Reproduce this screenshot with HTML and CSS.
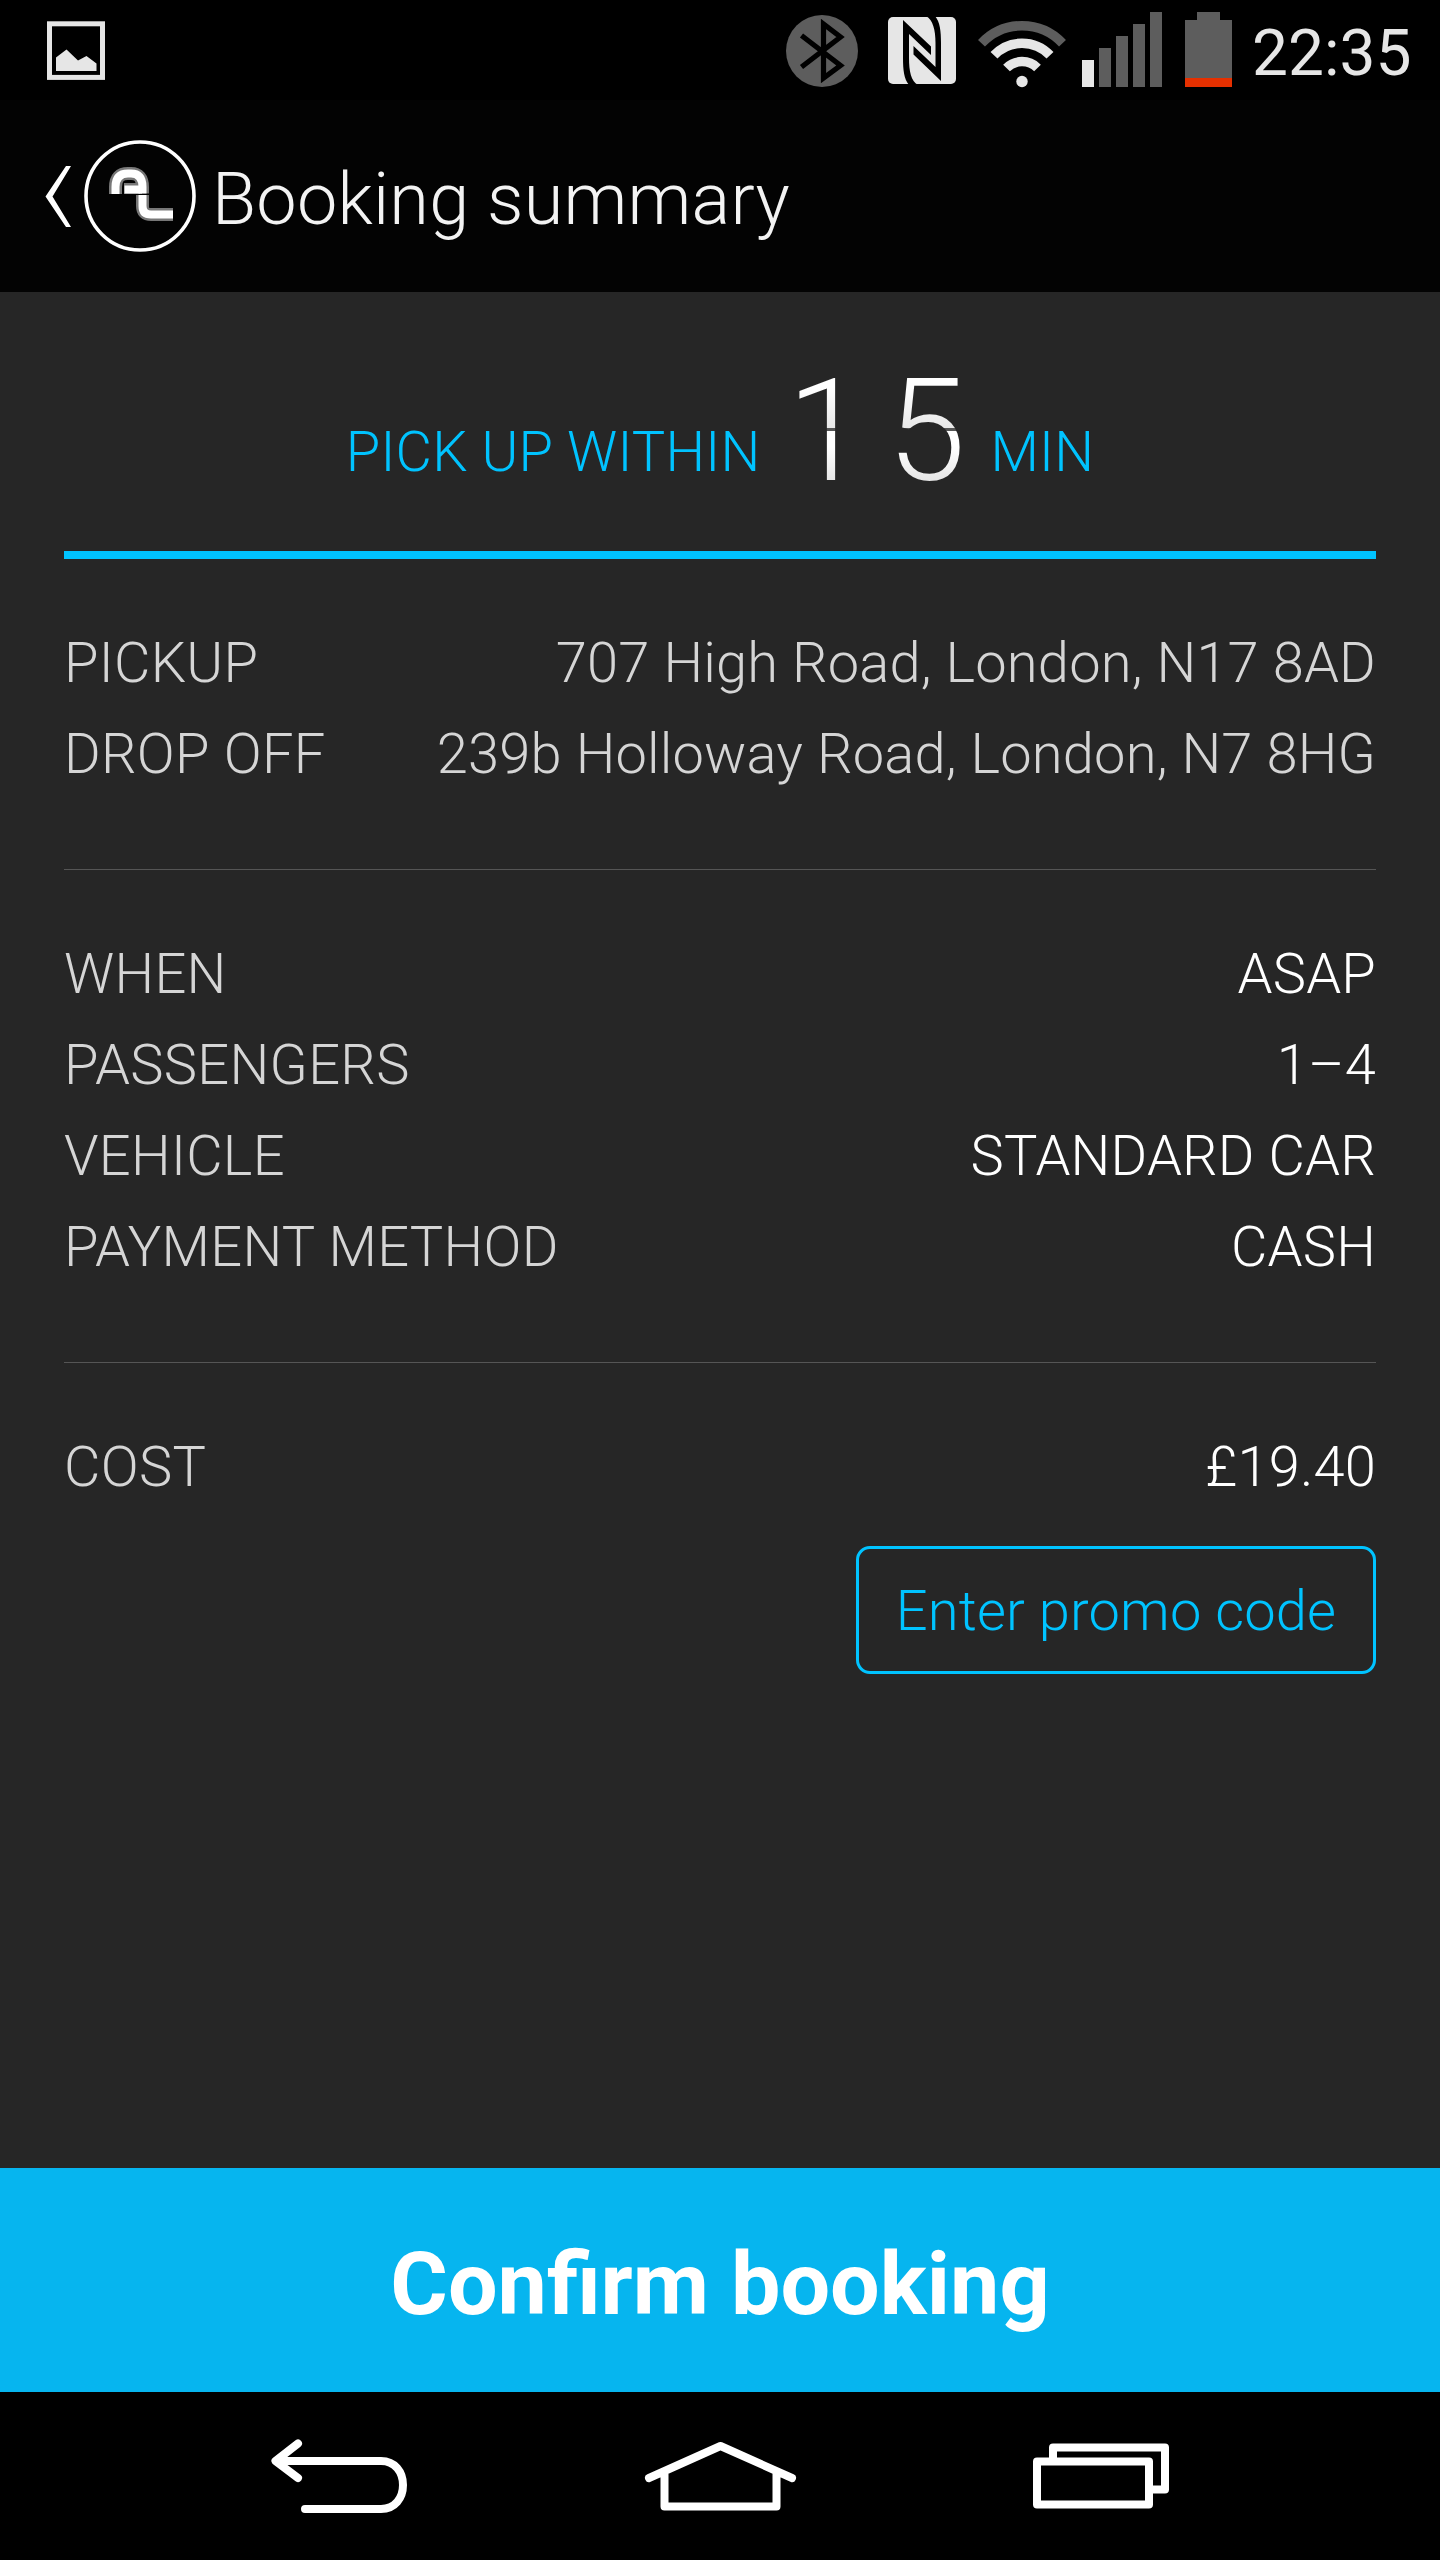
FILE: index.html
```
<!DOCTYPE html>
<html lang="en">
<head>
<meta charset="utf-8">
<title>Booking summary</title>
<link rel="stylesheet" href="styles.css">
</head>
<body>
<div class="screen">
  <div class="status">
    <svg class="status-left" width="60" height="100" viewBox="46 0 60 100">
      <rect x="49.5" y="23.8" width="53" height="53.6" fill="none" stroke="#e6e6e6" stroke-width="5"/>
      <path d="M56 71V57.500L66.500 49.500L78 60.500L86.500 56L96.500 63.500V71Z" fill="#e6e6e6"/>
    </svg>
    <svg class="status-icons" width="460" height="100" viewBox="780 0 460 100">
      <circle cx="822" cy="51" r="36" fill="#5d5d5d"/>
      <path d="M801.500 35.500L840.500 65.500L823.500 78V24L840.500 37L801.500 67" fill="none" stroke="#000" stroke-width="5.200"/>
      <rect x="888" y="17" width="68" height="67" rx="5" fill="#e6e6e6"/>
      <path d="M903 20L931 46.500V55L909 34V58C909 71 911 81 918 85H909C904 79 903 70 903 58Z"/>
      <path d="M941 81L913.500 54.500V46L935.500 67V43C935.500 30 933 20 926 16H935C940 22 941 31 941 43Z"/>
      <g fill="none" stroke="#e6e6e6" stroke-width="9.500">
        <path d="M981.500 43.300A55.500 55.500 0 0 1 1062.500 43.300" stroke="#5d5d5d"/>
        <path d="M994 55.300A38.500 38.500 0 0 1 1050 55.300"/>
        <path d="M1006.500 68A22 22 0 0 1 1037.500 68"/>
      </g>
      <circle cx="1022" cy="81.500" r="5.700" fill="#e6e6e6"/>
      <path d="M1082 60h12v27h-12Z" fill="#e6e6e6"/>
      <path d="M1099 48h12v39h-12ZM1116 36h12v51h-12ZM1133 24h12v63h-12ZM1150 12h12v75h-12ZM1197 12h23v8h12v58h-47V20h12Z" fill="#5d5d5d"/>
      <path d="M1185 78h47v9h-47Z" fill="#e63000"/>
    </svg>
    <span class="clock">22:35</span>
  </div>
  <header class="bar">
    <svg width="152" height="192" viewBox="45 100 152 192">
      <path d="M66 166H71L52.500 196.500L71 227H66L45.500 196.500Z" fill="#fff"/>
      <circle cx="140" cy="196" r="54" fill="none" stroke="#fff" stroke-width="3.600"/>
      <g fill="none" stroke="#777" stroke-width="13">
        <path d="M115.500 194V187Q115.500 173.500 128 173.500H131Q142.500 173.500 142.500 187V193.500"/>
        <path d="M124 188.500H140" stroke-width="11"/>
        <path d="M142.500 195V206Q142.500 214.500 151 214.500H173"/>
      </g>
      <g fill="none" stroke="#fff" stroke-width="8">
        <path d="M115.500 194V187Q115.500 173.500 128 173.500H131Q142.500 173.500 142.500 187V193.500"/>
        <path d="M124.500 189.500H142"/>
        <path d="M142.500 195V206Q142.500 214.500 151 214.500H173"/>
      </g>
    </svg>
    <h1 class="title">Booking summary</h1>
  </header>
  <main class="content">
    <section class="eta">
      <span class="eta-text">PICK UP WITHIN</span>
      <span class="digits"><span class="digit">1</span><span class="digit">5</span></span>
      <span class="eta-text">MIN</span>
    </section>
    <section class="group">
      <div class="row"><span class="label">PICKUP</span><span class="value">707 High Road, London, N17 8AD</span></div>
      <div class="row"><span class="label">DROP OFF</span><span class="value">239b Holloway Road, London, N7 8HG</span></div>
    </section>
    <section class="group">
      <div class="row"><span class="label">WHEN</span><span class="value strong">ASAP</span></div>
      <div class="row"><span class="label">PASSENGERS</span><span class="value strong">1–4</span></div>
      <div class="row"><span class="label">VEHICLE</span><span class="value strong">STANDARD CAR</span></div>
      <div class="row"><span class="label">PAYMENT METHOD</span><span class="value strong">CASH</span></div>
    </section>
    <section class="group cost">
      <div class="row"><span class="label">COST</span><span class="value strong">£19.40</span></div>
      <button class="promo">Enter promo code</button>
    </section>
  </main>
  <button class="confirm">Confirm booking</button>
  <nav class="nav">
    <svg width="1440" height="168" viewBox="0 2392 1440 168" fill="none" stroke="#fff" stroke-width="8" stroke-linecap="round" stroke-linejoin="round">
      <path d="M298 2443.500L275.500 2461L298 2478M277 2461H381C395 2461 403 2472 403 2485S395 2509 381 2509H305"/>
      <path d="M649 2478L720.500 2446L792 2478M664.500 2472V2506.500H776.500V2472"/>
      <path d="M1053 2461V2447.500H1165V2489.500H1150M1037 2461.500H1149V2504.500H1037Z" stroke-linecap="butt"/>
    </svg>
  </nav>
</div>
</body>
</html>
```
FILE: styles.css
```
* { box-sizing: border-box; }
body { margin: 0; background: #262626; font-family: Roboto, "Liberation Sans", sans-serif; font-weight: 300; }
button { font: inherit; background: none; border: 0; padding: 0; }
svg { display: block; flex: none; }
.screen { width: 1440px; height: 2560px; display: flex; flex-direction: column; background: #262626; }
.status { height: 100px; background: #000; display: flex; align-items: center; padding-left: 46px; }
.status-icons { margin-left: 674px; }
.clock { margin-left: 12px; font-size: 64px; font-weight: 400; line-height: 80px; padding-top: 7px; color: #e6e6e6; }
.bar { height: 192px; background: #030303; display: flex; align-items: center; padding-left: 45px; }
.title { margin: 0 0 0 15px; padding-top: 7px; font-size: 72px; font-weight: 300; line-height: 84px; letter-spacing: 0.2px; color: #f3f3f3; }
.content { flex: 1; padding: 0 64px; }
.eta { height: 267px; border-bottom: 8px solid #00c3ff; display: flex; align-items: flex-end; justify-content: center; color: #00c3ff; font-size: 56px; line-height: 66px; }
.eta-text { margin-bottom: 66px; letter-spacing: 0.2px; }
.digits { display: flex; gap: 2px; margin: 0 15px 34px 17px; font-size: 142px; line-height: 170px; }
.digit {
  width: 98px;
  text-align: center;
  color: transparent;
  background: linear-gradient(#fff 40px, #e8e8e8 81px, #555 81px, #555 84px, #fff 84px, #fff 100px, #e6e6e6 134px);
  -webkit-background-clip: text;
  background-clip: text;
}
.group { padding: 59px 0 69px; border-bottom: 1px solid #555; }
.row { display: flex; justify-content: space-between; height: 91px; line-height: 91px; font-size: 56px; color: #d5d5d5; white-space: nowrap; }
.label { letter-spacing: 0.3px; }
.value { letter-spacing: 0.18px; }
.strong { color: #fff; }
.cost { border: 0; display: flex; flex-direction: column; }
.promo { align-self: flex-end; width: 520px; height: 128px; margin-top: 33px; padding-top: 2px; border: 3px solid #00c3ff; border-radius: 14px; color: #00c3ff; font-size: 56px; letter-spacing: 0.15px; }
.confirm { height: 224px; padding-top: 6px; background: #06b5ef; color: #fff; font-size: 88px; font-weight: 700; }
.nav { height: 168px; background: #000; }
```
